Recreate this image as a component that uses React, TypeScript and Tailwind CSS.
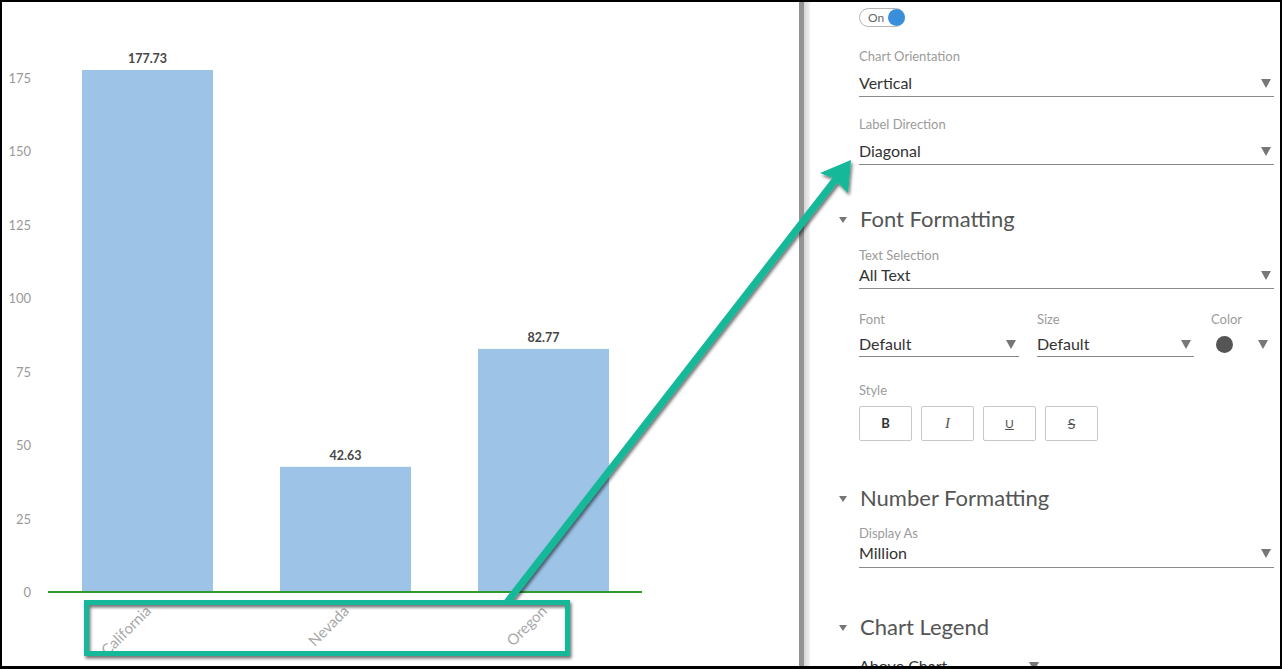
import type { ReactNode } from "react";

const ticks = [0, 25, 50, 75, 100, 125, 150, 175];
const bars = [
  { name: "California", value: 177.73, x: 82 },
  { name: "Nevada", value: 42.63, x: 280 },
  { name: "Oregon", value: 82.77, x: 478 },
];
const y0 = 592;
const k = 2.937;

function Caret({ className = "" }: { className?: string }) {
  return (
    <svg width="10" height="9" viewBox="0 0 10 9" className={className}>
      <polygon points="0,0 10,0 5,9" fill="#777" />
    </svg>
  );
}

function Label({ children, className = "" }: { children: ReactNode; className?: string }) {
  return <div className={`text-[13px] leading-[16px] text-[#9b9b9b] ${className}`}>{children}</div>;
}

function Select({ value, className = "", pb = "pb-[4px]" }: { value: string; className?: string; pb?: string }) {
  return (
    <div className={`flex items-center justify-between border-b border-[#8a8a8a] ${pb} ${className}`}>
      <span className="text-[16px] leading-[20px] text-[#333]">{value}</span>
      <Caret className="mr-[3px]" />
    </div>
  );
}

function Section({ title, className = "" }: { title: string; className?: string }) {
  return (
    <div className={`-ml-[20px] flex items-center gap-[13px] ${className}`}>
      <svg width="8" height="6" viewBox="0 0 8 6" className="translate-y-[1px]">
        <polygon points="0,0 8,0 4,6" fill="#777" />
      </svg>
      <span className="text-[22px] leading-[26px] text-[#555]">{title}</span>
    </div>
  );
}

function Chart() {
  return (
    <svg width="797" height="664" viewBox="2 2 797 664" className="block">
      {ticks.map((t) => (
        <text key={t} x={31} y={y0 - t * k + 5} textAnchor="end" fontSize="13" fill="#9a9a9a">
          {t}
        </text>
      ))}
      {bars.map((b) => {
        const h = b.value * k;
        return (
          <g key={b.name}>
            <rect x={b.x} y={y0 - h} width={131} height={h} fill="#9dc3e6" />
            <text x={b.x + 65.5} y={y0 - h - 7} textAnchor="middle" fontSize="12.5" fontWeight="700" fill="#474747">
              {b.value.toFixed(2)}
            </text>
            <text
              transform={`translate(${b.x + 70} 612) rotate(-45)`}
              textAnchor="end"
              fontSize="15"
              fill="#a8a8a8"
            >
              {b.name}
            </text>
          </g>
        );
      })}
      <line x1={48} x2={642} y1={y0} y2={y0} stroke="#2f9a2f" strokeWidth="2" />
    </svg>
  );
}

function Overlay() {
  return (
    <svg
      className="pointer-events-none absolute left-0 top-0"
      width="1282"
      height="669"
      viewBox="0 0 1282 669"
    >
      <defs>
        <filter id="sh" x="-20%" y="-20%" width="140%" height="140%">
          <feDropShadow dx="1.5" dy="2.5" stdDeviation="1.5" floodColor="#000" floodOpacity="0.55" />
        </filter>
      </defs>
      <g filter="url(#sh)">
        <rect x={86.5} y={602.5} width={481} height={51} fill="none" stroke="#14b89a" strokeWidth="5" />
        <line x1={508} y1={601} x2={836} y2={179} stroke="#14b89a" strokeWidth="7" strokeLinecap="round" />
        <polygon points="851,160 820,173 833,178 848,193" fill="#14b89a" />
      </g>
    </svg>
  );
}

export default function App() {
  return (
    <div className="relative h-[669px] w-[1282px] bg-white font-['Lato','Open_Sans',sans-serif]">
      <div className="flex h-full w-full overflow-hidden border-l-2 border-r-2 border-t-2 border-b-[3px] border-black">
        <div className="w-[797px] shrink-0">
          <Chart />
        </div>
        <div className="w-[5px] shrink-0 bg-[#939393]" />
        <div className="w-[6px] shrink-0 bg-gradient-to-r from-[#d6d6d6] to-[#f2f2f2]" />
        <div className="flex-1 pl-[49px] pr-[6px]">
          <div className="mt-[6px] flex h-[19px] w-[46px] items-center justify-between rounded-full border border-[#b5b5b5] pl-[8px]">
            <span className="text-[12px] leading-[14px] text-[#666]">On</span>
            <span className="-mr-[1px] h-[17px] w-[17px] rounded-full bg-[#3a8fdc]" />
          </div>

          <Label className="mt-[21px]">Chart Orientation</Label>
          <Select value="Vertical" className="mt-[9px]" pb="pb-[3px]" />

          <Label className="mt-[19px]">Label Direction</Label>
          <Select value="Diagonal" className="mt-[9px]" pb="pb-[3px]" />

          <Section title="Font Formatting" className="mt-[41px]" />
          <Label className="mt-[15px]">Text Selection</Label>
          <Select value="All Text" className="mt-[2px]" pb="pb-[3px]" />

          <div className="mt-[22px] flex">
            <div className="w-[160px]">
              <Label>Font</Label>
              <Select value="Default" className="mt-[7px]" pb="pb-[2px]" />
            </div>
            <div className="ml-[18px] w-[157px]">
              <Label>Size</Label>
              <Select value="Default" className="mt-[7px]" pb="pb-[2px]" />
            </div>
            <div className="ml-[17px]">
              <Label>Color</Label>
              <div className="mt-[7px] flex h-[20px] items-center">
                <span className="ml-[5px] h-[17px] w-[17px] rounded-full bg-[#555]" />
                <Caret className="ml-[25px]" />
              </div>
            </div>
          </div>

          <Label className="mt-[25px]">Style</Label>
          <div className="mt-[8px] flex gap-[9px]">
            <div className="flex h-[35px] w-[53px] items-center justify-center rounded-[2px] border border-[#c8c8c8] text-[13px] font-bold text-[#333]">
              B
            </div>
            <div className="flex h-[35px] w-[53px] items-center justify-center rounded-[2px] border border-[#c8c8c8] font-['Liberation_Serif',serif] text-[15px] italic text-[#555]">
              I
            </div>
            <div className="flex h-[35px] w-[53px] items-center justify-center rounded-[2px] border border-[#c8c8c8] text-[12px] text-[#555] underline">
              U
            </div>
            <div className="flex h-[35px] w-[53px] items-center justify-center rounded-[2px] border border-[#c8c8c8] text-[14px] text-[#555] line-through">
              S
            </div>
          </div>

          <Section title="Number Formatting" className="mt-[44px]" />
          <Label className="mt-[14px]">Display As</Label>
          <Select value="Million" className="mt-[2px]" />

          <Section title="Chart Legend" className="mt-[46px]" />
          <div className="mt-[16px] flex w-[183px] items-center justify-between">
            <span className="text-[16px] leading-[20px] text-[#333]">Above Chart</span>
            <Caret className="mr-[3px]" />
          </div>
        </div>
      </div>
      <Overlay />
    </div>
  );
}
